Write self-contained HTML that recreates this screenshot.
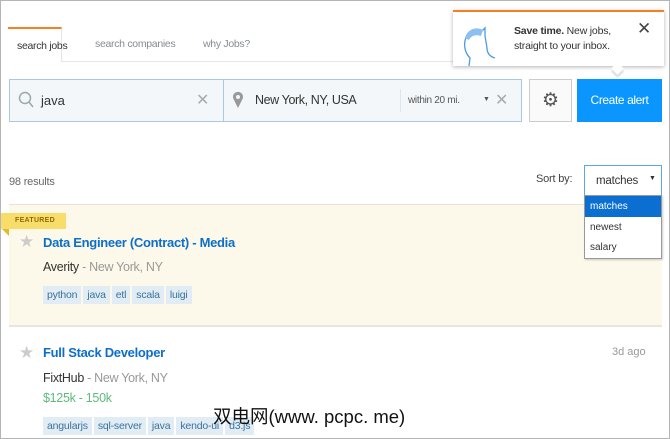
<!DOCTYPE html><html><head><style>
*{margin:0;padding:0;box-sizing:border-box}
body{width:670px;height:439px;overflow:hidden;background:#fff;font-family:"Liberation Sans",sans-serif;position:relative;border:1px solid #b5b5b5;white-space:nowrap}
.a{position:absolute}
.tag{display:inline-block;background:#e1ecf4;color:#39739d;font-size:10.5px;padding:3px 4px;margin-right:2px;height:18px;line-height:12px;letter-spacing:-.2px}
.t{color:#0c6fc9;font-weight:bold;font-size:13px}
</style></head><body>
<div class="a" style="left:7px;top:60px;width:654px;border-top:1px solid #e4e6e8"></div>
<div class="a" style="left:7px;top:26px;width:54px;height:35px;border-top:2px solid #f48024;border-right:1px solid #e4e6e8;background:#fff;font-size:10.5px;letter-spacing:-.3px;color:#333;padding:11px 0 0 9px">search jobs</div>
<div class="a" style="left:94px;top:37px;font-size:10.5px;letter-spacing:-.3px;color:#848d95">search companies</div>
<div class="a" style="left:202px;top:37px;font-size:10.5px;letter-spacing:-.3px;color:#848d95">why Jobs?</div>
<div class="a" style="left:452px;top:9px;width:211px;height:56px;background:#fff;border-top:2px solid #f48024;box-shadow:0 1px 4px rgba(0,0,0,.3)">
<svg class="a" style="left:8px;top:12px" width="36" height="42" viewBox="0 0 36 42"><path d="M8 42 L9 34 C3 28 2 18 6 12 C9 7 16 6 20 8 L24 4 L24 12 L26 24 C26 30 30 33 34 34" fill="none" stroke="#4a9ce6" stroke-width="1.3"/><path d="M4 14 C6 6 14 2 22 6 L20 12 C14 10 10 12 8 16Z" fill="#8cc0f0"/></svg>
<div class="a" style="left:61px;top:12px;font-size:10.5px;line-height:15px;color:#333;letter-spacing:-.2px"><b>Save time.</b> New jobs,<br>straight to your inbox.</div>
<div class="a" style="left:184px;top:7px;font-size:17px;color:#444">✕</div>
</div>
<div class="a" style="left:612px;top:63px;width:9px;height:9px;background:#fff;transform:rotate(45deg);box-shadow:2px 2px 2px rgba(0,0,0,.15)"></div>
<div class="a" style="left:8px;top:78px;width:513px;height:43px;background:#f3f7fa;border:1px solid #a9c9e0"></div>
<div class="a" style="left:222px;top:79px;height:41px;border-left:1px solid #a9c9e0"></div>
<div class="a" style="left:399px;top:88px;height:23px;border-left:1px solid #dde6ee"></div>
<svg class="a" style="left:17px;top:90px" width="16" height="17"><circle cx="7" cy="7" r="5.5" fill="none" stroke="#9aa" stroke-width="1.5"/><path d="M11 11 L15 16" stroke="#9aa" stroke-width="1.5"/></svg>
<div class="a" style="left:40px;top:92px;font-size:13px;color:#333">java</div>
<div class="a" style="left:195px;top:89px;font-size:16px;color:#aaa">✕</div>
<svg class="a" style="left:231px;top:90px" width="12" height="17"><path d="M6 17 L1.5 8 A5 5 0 1 1 10.5 8Z" fill="#999"/><circle cx="6" cy="6" r="2" fill="#f3f7fa"/></svg>
<div class="a" style="left:254px;top:92px;font-size:12.5px;letter-spacing:-.4px;color:#333">New York, NY, USA</div>
<div class="a" style="left:407px;top:94px;font-size:10px;letter-spacing:-.3px;color:#555">within 20 mi.</div>
<div class="a" style="left:482px;top:95px;font-size:7px;color:#555">▼</div>
<div class="a" style="left:494px;top:89px;font-size:16px;color:#aaa">✕</div>
<div class="a" style="left:528px;top:78px;width:43px;height:43px;border:1px solid #ccc;background:#fafafa;text-align:center;line-height:42px;font-size:19px;color:#555">⚙</div>
<div class="a" style="left:576px;top:78px;width:85px;height:43px;background:#0a95ff;color:#fff;font-size:12px;letter-spacing:-.4px;text-align:center;line-height:43px">Create alert</div>
<div class="a" style="left:8px;top:175px;font-size:11px;letter-spacing:-.2px;color:#666">98 results</div>
<div class="a" style="left:535px;top:172px;font-size:11px;letter-spacing:-.2px;color:#444">Sort by:</div>
<div class="a" style="left:8px;top:203px;width:653px;height:123px;background:#fdf9ea;border-top:1px solid #e8e4d4;border-bottom:2px solid #e8e6de"></div>
<div class="a" style="left:0;top:212px;width:65px;height:16px;background:#f9dd6a;font-size:7px;font-weight:bold;color:#8a6d0b;padding:4px 0 0 14px;letter-spacing:.3px">FEATURED</div>
<div class="a" style="left:1px;top:228px;width:0;height:0;border-top:7px solid #e5b92c;border-left:7px solid transparent"></div>
<div class="a" style="left:18px;top:231px;font-size:17px;color:#ccc">★</div>
<div class="a t" style="left:42px;top:234px;letter-spacing:-.3px">Data Engineer (Contract) - Media</div>
<div class="a" style="left:42px;top:259px;font-size:12.5px;letter-spacing:-.3px;color:#333">Averity <span style="color:#999">- New York, NY</span></div>
<div class="a" style="left:42px;top:284px"><span class="tag">python</span><span class="tag">java</span><span class="tag">etl</span><span class="tag">scala</span><span class="tag">luigi</span></div>
<div class="a" style="left:18px;top:342px;font-size:17px;color:#ccc">★</div>
<div class="a t" style="left:42px;top:344px;letter-spacing:-.3px">Full Stack Developer</div>
<div class="a" style="left:611px;top:345px;font-size:11px;color:#999">3d ago</div>
<div class="a" style="left:42px;top:370px;font-size:12.5px;letter-spacing:-.3px;color:#333">FixtHub <span style="color:#999">- New York, NY</span></div>
<div class="a" style="left:42px;top:390px;font-size:12.5px;letter-spacing:-.3px;color:#5eba7d">$125k - 150k</div>
<div class="a" style="left:42px;top:415px"><span class="tag">angularjs</span><span class="tag">sql-server</span><span class="tag">java</span><span class="tag">kendo-ui</span><span class="tag">d3.js</span></div>
<div class="a" style="left:212px;top:402px;font-size:18.5px;color:#111;font-family:'Liberation Sans','Noto Sans CJK SC',sans-serif">双电网(www. pcpc. me)</div>
<div class="a" style="left:583px;top:164px;width:78px;height:31px;border:1px solid #5ca7e6;background:#fff;font-size:11.5px;letter-spacing:-.2px;color:#333;padding:9px 0 0 11px">matches<span style="position:absolute;left:64px;top:9px;font-size:7px">▼</span></div>
<div class="a" style="left:583px;top:194px;width:78px;height:64px;background:#fff;border:1px solid #999;box-shadow:1px 1px 2px rgba(0,0,0,.2);font-size:10px;color:#333">
<div style="background:#0a6fd1;color:#fff;height:21px;padding:5px 5px">matches</div>
<div style="height:21px;padding:5px 5px">newest</div>
<div style="height:20px;padding:4px 5px">salary</div></div>
</body></html>
